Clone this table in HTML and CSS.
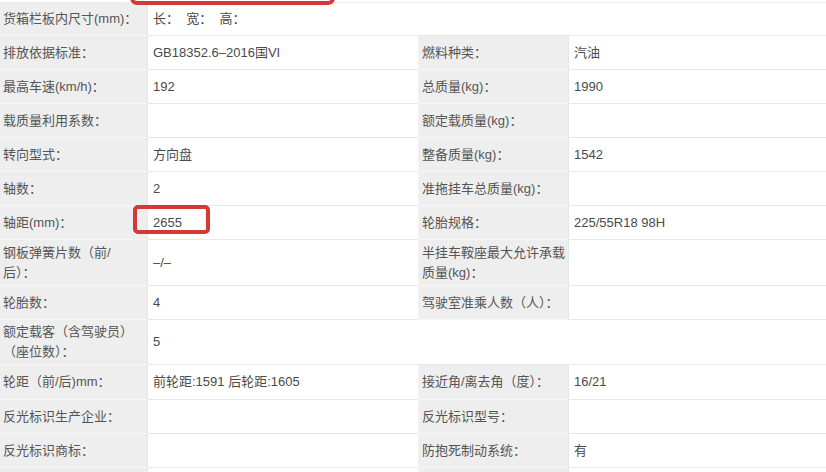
FILE: index.html
```html
<!DOCTYPE html>
<html lang="zh-CN">
<head>
<meta charset="utf-8">
<title>车辆参数</title>
<link rel="stylesheet" href="styles.css">
</head>
<body>
<div class="page">
  <div class="mark mark-top"></div>
  <div class="spec">
    <div class="row h33">
      <div class="lab">货箱栏板内尺寸(mm)：</div>
      <div class="val wide">长：&nbsp;&nbsp;宽：&nbsp;&nbsp;高：</div>
    </div>
    <div class="row">
      <div class="lab">排放依据标准：</div>
      <div class="val">GB18352.6–2016国VI</div>
      <div class="lab lab2">燃料种类：</div>
      <div class="val val2">汽油</div>
    </div>
    <div class="row">
      <div class="lab">最高车速(km/h)：</div>
      <div class="val">192</div>
      <div class="lab lab2">总质量(kg)：</div>
      <div class="val val2">1990</div>
    </div>
    <div class="row">
      <div class="lab">载质量利用系数：</div>
      <div class="val"></div>
      <div class="lab lab2">额定载质量(kg)：</div>
      <div class="val val2"></div>
    </div>
    <div class="row">
      <div class="lab">转向型式：</div>
      <div class="val">方向盘</div>
      <div class="lab lab2">整备质量(kg)：</div>
      <div class="val val2">1542</div>
    </div>
    <div class="row">
      <div class="lab">轴数：</div>
      <div class="val">2</div>
      <div class="lab lab2">准拖挂车总质量(kg)：</div>
      <div class="val val2"></div>
    </div>
    <div class="row">
      <div class="lab">轴距(mm)：</div>
      <div class="val marked">2655<span class="mark mark-cell"></span></div>
      <div class="lab lab2">轮胎规格：</div>
      <div class="val val2">225/55R18 98H</div>
    </div>
    <div class="row h46">
      <div class="lab">钢板弹簧片数（前/后）：</div>
      <div class="val">–/–</div>
      <div class="lab lab2">半挂车鞍座最大允许承载质量(kg)：</div>
      <div class="val val2"></div>
    </div>
    <div class="row">
      <div class="lab">轮胎数：</div>
      <div class="val">4</div>
      <div class="lab lab2">驾驶室准乘人数（人）：</div>
      <div class="val val2"></div>
    </div>
    <div class="row h45">
      <div class="lab">额定载客（含驾驶员）（座位数）：</div>
      <div class="val wide">5</div>
    </div>
    <div class="row h35">
      <div class="lab">轮距（前/后)mm：</div>
      <div class="val">前轮距:1591 后轮距:1605</div>
      <div class="lab lab2">接近角/离去角（度）：</div>
      <div class="val val2">16/21</div>
    </div>
    <div class="row">
      <div class="lab">反光标识生产企业：</div>
      <div class="val"></div>
      <div class="lab lab2">反光标识型号：</div>
      <div class="val val2"></div>
    </div>
    <div class="row">
      <div class="lab">反光标识商标：</div>
      <div class="val"></div>
      <div class="lab lab2">防抱死制动系统：</div>
      <div class="val val2">有</div>
    </div>
    <div class="row tail">
      <div class="lab"></div>
      <div class="val"></div>
      <div class="lab lab2"></div>
      <div class="val val2"></div>
    </div>
  </div>
</div>
</body>
</html>
```

FILE: styles.css
```css
* { box-sizing: border-box; }
html, body {
  margin: 0;
  padding: 0;
  background: #ffffff;
  overflow: hidden;
}
.page {
  position: relative;
  width: 826px;
  height: 472px;
  overflow: hidden;
  padding-top: 2px;
  font-family: "Liberation Sans", "Noto Sans CJK SC", sans-serif;
  font-size: 13px;
  color: #4a4a4a;
}
.spec {
  border-top: 1px solid #ececec;
}
.row {
  display: grid;
  grid-template-columns: 148px 270px 151px 1fr;
  height: 34px;
}
.row.h33 { height: 33px; }
.row.h35 { height: 35px; }
.row.h45 { height: 45px; }
.row.h46 { height: 46px; }
.row.tail { height: 4px; }
.row.tail .lab, .row.tail .val { border-bottom: 0; }
.lab, .val {
  display: flex;
  align-items: center;
  line-height: 20px;
}
.lab {
  background: #eeeeee;
  color: #555555;
  padding: 0 6px 0 3px;
  border-bottom: 1px solid #f6f6f6;
  border-right: 1px solid #e6e6e6;
}
.lab2 {
  padding-left: 3px;
  padding-right: 0;
  border-left: 1px solid #f2f2f2;
}
.val {
  background: #ffffff;
  padding: 0 5px;
  border-bottom: 1px solid #e8e8e8;
}
.val2 { padding-left: 5px; }
.wide { grid-column: 2 / 5; }
.marked { position: relative; }
.mark {
  position: absolute;
  border: 4px solid #d23a33;
  border-radius: 5px;
  pointer-events: none;
}
.mark-top {
  left: 130px;
  top: -22px;
  width: 205px;
  height: 27px;
  border-radius: 7px;
}
.mark-cell {
  left: -15px;
  top: -1px;
  width: 77px;
  height: 29px;
}
```
